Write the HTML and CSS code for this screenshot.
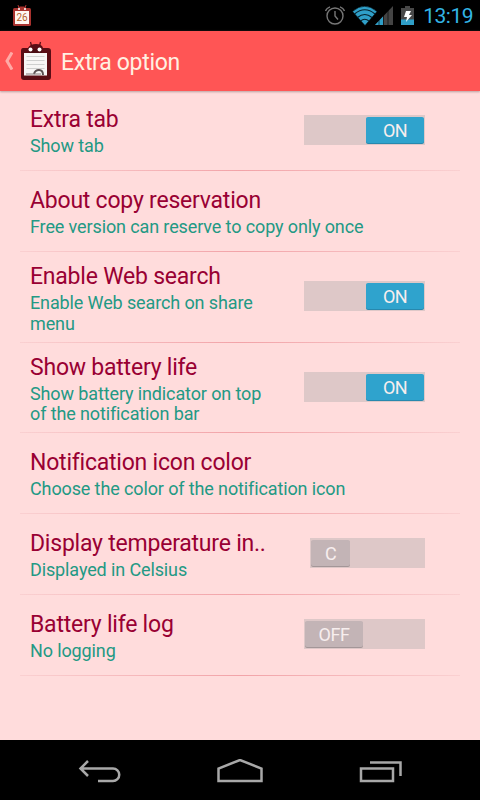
FILE: index.html
```html
<!DOCTYPE html>
<html lang="en">
<head>
    <meta charset="utf-8">
    <title>Extra option</title>
    <link rel="stylesheet" href="styles.css">
</head>
<body>
<div class="statusbar">
    <svg class="calendar" width="20" height="22" viewBox="0 0 20 22">
        <path d="M6 0l1 3M14 0l-1 3" stroke="#a33" />
        <rect x="1" y="3" width="18" height="18" rx="1.5" fill="#a8322e" />
        <rect x="6" y="1.5" width="8" height="4" rx="2" fill="#a8322e" />
        <rect x="3" y="6" width="14" height="13" fill="#fff6f0" />
        <circle cx="7" cy="4" r="1" fill="#fff" /><circle cx="13" cy="4" r="1" fill="#fff" />
        <text x="10" y="16" text-anchor="middle" class="day">26</text>
    </svg>
    <div class="status-icons">
        <svg width="20" height="20" viewBox="0 0 20 20" fill="none" stroke="#777" stroke-width="1.4">
            <circle cx="10" cy="10" r="8" />
            <path d="M10 5v5l3 3.5M0.5 5Q1.5 2 5 0.8M19.5 5Q18.5 2 15 0.8" />
        </svg>
        <svg class="wifi" width="42" height="20" viewBox="0 0 42 20">
            <path d="M41 0V19H23z" fill="#444" />
            <path d="M31 10.5V19H23z" fill="#2f9fc8" />
            <path d="M27 8v11M31.5 6v13M36 3v16" stroke="#000" stroke-width="0.6" />
            <path d="M0.5 5.5Q12.5 -5 25 5.5L13 19.5z" fill="#2f9fc8" stroke="#000" stroke-width="0.5" />
            <path d="M2.5 8Q12.8 -0.5 23 8M5.5 11.5Q12.8 5.5 20 11.5M8.5 15Q12.8 11.5 17 15" fill="none" stroke="#06202b" stroke-width="1.1" />
        </svg>
        <svg class="battery" width="13" height="20" viewBox="0 0 13 20">
            <path d="M4 0h5v2h4v17H0V2h4z" fill="#484848" />
            <path d="M0 13.5h13V19H0z" fill="#2f9fc8" />
            <path d="M5 5h5L8 9h3l-6 7 1-5H3z" fill="#fff" />
        </svg>
        <span class="clock">13:19</span>
    </div>
</div>

<div class="header">
    <svg class="up" width="9" height="18" viewBox="0 0 9 18" fill="none" stroke="#ffaaa6" stroke-width="3">
        <path d="M8 0.5L3 9l5 8.5" />
    </svg>
    <svg class="logo" width="32" height="40" viewBox="0 0 32 40">
        <path d="M10.5 1l1 4M20.5 1l-1 4" stroke="#5a0f16" stroke-width="1.3" />
        <path d="M3 7h5q2-4 8-4t7 4h5q3 0 3 3v26q0 3-3 3H4q-3 0-3-3V10q0-3 2-3z" fill="#5a0d15" />
        <rect x="4" y="12" width="23" height="22.5" fill="#f7f5f5" />
        <path d="M9 12q0-4 7-4t6 4z" fill="#4a0c13" />
        <circle cx="10.5" cy="8.5" r="2" fill="#fff" /><circle cx="19.5" cy="8.5" r="2" fill="#fff" />
        <path d="M6.5 15.5h18M6.5 19.5h18M6.5 23.5h18M6.5 27.5h18" stroke="#cfcfcf" />
        <path d="M14 33q1-4 5-4t4 5" fill="none" stroke="#5b5052" stroke-width="2" />
        <path d="M6 33h15" stroke="#877c7c" />
    </svg>
    <h1>Extra option</h1>
</div>

<div class="list">
    <div class="row">
        <div class="text">
            <h2>Extra tab</h2>
            <p>Show tab</p>
        </div>
        <div class="switch on"><span>ON</span></div>
    </div>
    <div class="row">
        <div class="text">
            <h2>About copy reservation</h2>
            <p>Free version can reserve to copy only once</p>
        </div>
    </div>
    <div class="row tall">
        <div class="text">
            <h2>Enable Web search</h2>
            <p>Enable Web search on share<br>menu</p>
        </div>
        <div class="switch on"><span>ON</span></div>
    </div>
    <div class="row tall battery-life">
        <div class="text">
            <h2>Show battery life</h2>
            <p>Show battery indicator on top<br>of the notification bar</p>
        </div>
        <div class="switch on"><span>ON</span></div>
    </div>
    <div class="row">
        <div class="text">
            <h2>Notification icon color</h2>
            <p>Choose the color of the notification icon</p>
        </div>
    </div>
    <div class="row">
        <div class="text">
            <h2>Display temperature in..</h2>
            <p>Displayed in Celsius</p>
        </div>
        <div class="switch unit"><span>C</span></div>
    </div>
    <div class="row">
        <div class="text">
            <h2>Battery life log</h2>
            <p>No logging</p>
        </div>
        <div class="switch off"><span>OFF</span></div>
    </div>
</div>

<div class="navbar">
    <svg width="44" height="26" viewBox="0 0 44 26">
        <path d="M11 2L3.5 9.5l7.5 7.5M3.5 9.5h32.5a6 6 0 0 1 0 12.5H21" />
    </svg>
    <svg width="48" height="26" viewBox="0 0 48 26">
        <path d="M2.5 22V9.5L24 1L45.5 9.5V22z" />
    </svg>
    <svg width="44" height="26" viewBox="0 0 44 26">
        <path d="M2 9.5h32v12.5H2zM11 3.5h30.5V17" />
    </svg>
</div>
</body>
</html>
```

FILE: styles.css
```css
body {
    margin: 0;
    width: 480px;
    height: 800px;
    display: flex;
    flex-direction: column;
    overflow: hidden;
    background-color: #ffdcdc;
    font-family: Roboto, "Noto Sans", sans-serif;
}

h1, h2, p {
    margin: 0;
    font-weight: normal;
    white-space: nowrap;
}

svg {
    display: block;
    flex: none;
}

.statusbar {
    height: 31px;
    box-sizing: border-box;
    padding: 0 7px 0 12px;
    display: flex;
    justify-content: space-between;
    align-items: center;
    background-color: #000;
}

.day {
    font-size: 10px;
    fill: #b5622f;
}

.status-icons {
    display: flex;
    align-items: center;
}

.wifi {
    margin-left: 7px;
}

.battery {
    margin: 0 9px 0 7px;
}

.clock {
    color: #33b5e5;
    font-size: 21px;
    letter-spacing: -0.5px;
    line-height: 30px;
}

.header {
    height: 60px;
    box-sizing: border-box;
    padding-left: 4px;
    display: flex;
    align-items: center;
    background-color: #ff5555;
    box-shadow: 0 1px 2px #b9a0a0;
}

.logo {
    margin: 0 9px 0 7px;
}

h1 {
    padding-top: 2px;
    color: #fff0e2;
    font-size: 23px;
    letter-spacing: -0.3px;
}

.list {
    flex: 1;
    margin-top: -1px;
    padding: 0 20px;
}

.row {
    height: 80px;
    padding: 0 35px 0 10px;
    display: flex;
    justify-content: space-between;
    align-items: center;
    border-bottom: 1px solid;
    border-image: linear-gradient(to right, #fad0d1, #f2a3a8 50%, #fad0d1) 1;
}

.tall {
    height: 90px;
}

.battery-life {
    height: 89px;
}

.text {
    padding-top: 3px;
}

h2 {
    color: #990033;
    font-size: 23px;
    letter-spacing: -0.22px;
    line-height: 28px;
}

p {
    padding-top: 2px;
    color: #239984;
    font-size: 18px;
    letter-spacing: -0.12px;
    line-height: 20.5px;
}

.switch {
    width: 121px;
    height: 30px;
    box-sizing: border-box;
    padding: 2px 1px 1px;
    display: flex;
    background-color: #dec8c8;
}

.switch span {
    width: 58px;
    height: 26px;
    border-radius: 2px;
    background-color: #c3b4b6;
    box-shadow: 0 1px 0 #a39698;
    color: #f7eeee;
    font-size: 18px;
    letter-spacing: -0.5px;
    line-height: 27px;
    text-align: center;
}

.on {
    justify-content: flex-end;
}

.switch.on span {
    background-color: #2fa3cd;
    box-shadow: 0 1px 0 #2788ae;
}

.unit, .off, .tall .switch {
    margin-bottom: 2px;
}

.unit {
    width: 115px;
}

.unit span {
    width: 39px;
}

.navbar {
    height: 60px;
    padding: 3px 77px 0;
    display: flex;
    justify-content: space-between;
    align-items: center;
    box-sizing: border-box;
    background-color: #000;
}

.navbar svg {
    fill: none;
    stroke: #a8a8a8;
    stroke-width: 2.5;
}
```
